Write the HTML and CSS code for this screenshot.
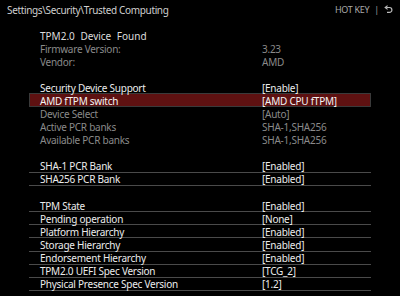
FILE: index.html
```html
<!DOCTYPE html>
<html>
	<head>
		<meta charset="UTF-8">
		<link rel="stylesheet" href="styles.css">
	</head>
	<body>
		<header class="topbar">
			<span class="crumbs">Settings\Security\Trusted Computing</span>
			<span class="hotkey">HOT KEY <span class="sep">|</span>
				<svg class="back" width="9" height="9" viewBox="0 0 9 9">
					<path d="M2.2 2.5 H5.5 A2.4 2.4 0 0 1 5.5 7.3 H3" fill="none" stroke="#bbb" stroke-width="1.2"/>
					<path d="M3.6 0.6 L1.2 2.5 L3.6 4.4" fill="none" stroke="#bbb" stroke-width="1.2"/>
				</svg>
			</span>
		</header>
		<div class="list">
			<div class="row title"><span class="label">TPM2.0 Device Found</span></div>
			<div class="row info"><span class="label">Firmware Version:</span><span class="value">3.23</span></div>
			<div class="row info"><span class="label">Vendor:</span><span class="value">AMD</span></div>
			<div class="gap"></div>
			<div class="row item"><span class="label">Security Device Support</span><span class="value">[Enable]</span></div>
			<div class="row item selected"><span class="label">AMD fTPM switch</span><span class="value">[AMD CPU fTPM]</span></div>
			<div class="row info"><span class="label">Device Select</span><span class="value">[Auto]</span></div>
			<div class="row info"><span class="label">Active PCR banks</span><span class="value">SHA-1,SHA256</span></div>
			<div class="row info"><span class="label">Available PCR banks</span><span class="value">SHA-1,SHA256</span></div>
			<div class="gap"></div>
			<div class="row item"><span class="label">SHA-1 PCR Bank</span><span class="value">[Enabled]</span></div>
			<div class="row item"><span class="label">SHA256 PCR Bank</span><span class="value">[Enabled]</span></div>
			<div class="gap"></div>
			<div class="row item"><span class="label">TPM State</span><span class="value">[Enabled]</span></div>
			<div class="row item"><span class="label">Pending operation</span><span class="value">[None]</span></div>
			<div class="row item"><span class="label">Platform Hierarchy</span><span class="value">[Enabled]</span></div>
			<div class="row item"><span class="label">Storage Hierarchy</span><span class="value">[Enabled]</span></div>
			<div class="row item"><span class="label">Endorsement Hierarchy</span><span class="value">[Enabled]</span></div>
			<div class="row item"><span class="label">TPM2.0 UEFI Spec Version</span><span class="value">[TCG_2]</span></div>
			<div class="row item"><span class="label">Physical Presence Spec Version</span><span class="value">[1.2]</span></div>
		</div>
	</body>
</html>
```

FILE: styles.css
```css
body {
	background: #000;
	color: #ececec;
	font-family: "Noto Sans", "Open Sans", sans-serif;
	font-size: 10px;
	letter-spacing: -0.25px;
	margin: 0;
}

.topbar {
	display: flex;
	justify-content: space-between;
	align-items: center;
	height: 19px;
	padding: 0 7px;
	color: #cfcfcf;
}
.crumbs {
	letter-spacing: -0.35px;
}
.hotkey {
	display: flex;
	align-items: center;
	gap: 5px;
	font-size: 9px;
	color: #aaa;
	letter-spacing: -0.3px;
}
.hotkey .sep {
	color: #999;
}

.list {
	margin: 10px 0 0 29px;
	width: 342px;
}

.row {
	display: flex;
	align-items: center;
	box-sizing: border-box;
	height: 13.1px;
	line-height: 12px;
}
.gap {
	height: 13.1px;
}
.label {
	width: 222px;
	padding-left: 11px;
}
.value {
	flex: 1;
}

.title .label {
	word-spacing: 3px;
	letter-spacing: 0;
	color: #ddd;
}
.info {
	color: #8a8a8a;
}
.item {
	border-bottom: 1px solid #4a4a4a;
	padding-top: 1px;
}
.selected {
	background: #5e1111;
	border: 1px solid #3a3a3a;
	height: 14px;
	margin-top: -1px;
	color: #f4f4f4;
}
.selected .label {
	padding-left: 10px;
}
```
